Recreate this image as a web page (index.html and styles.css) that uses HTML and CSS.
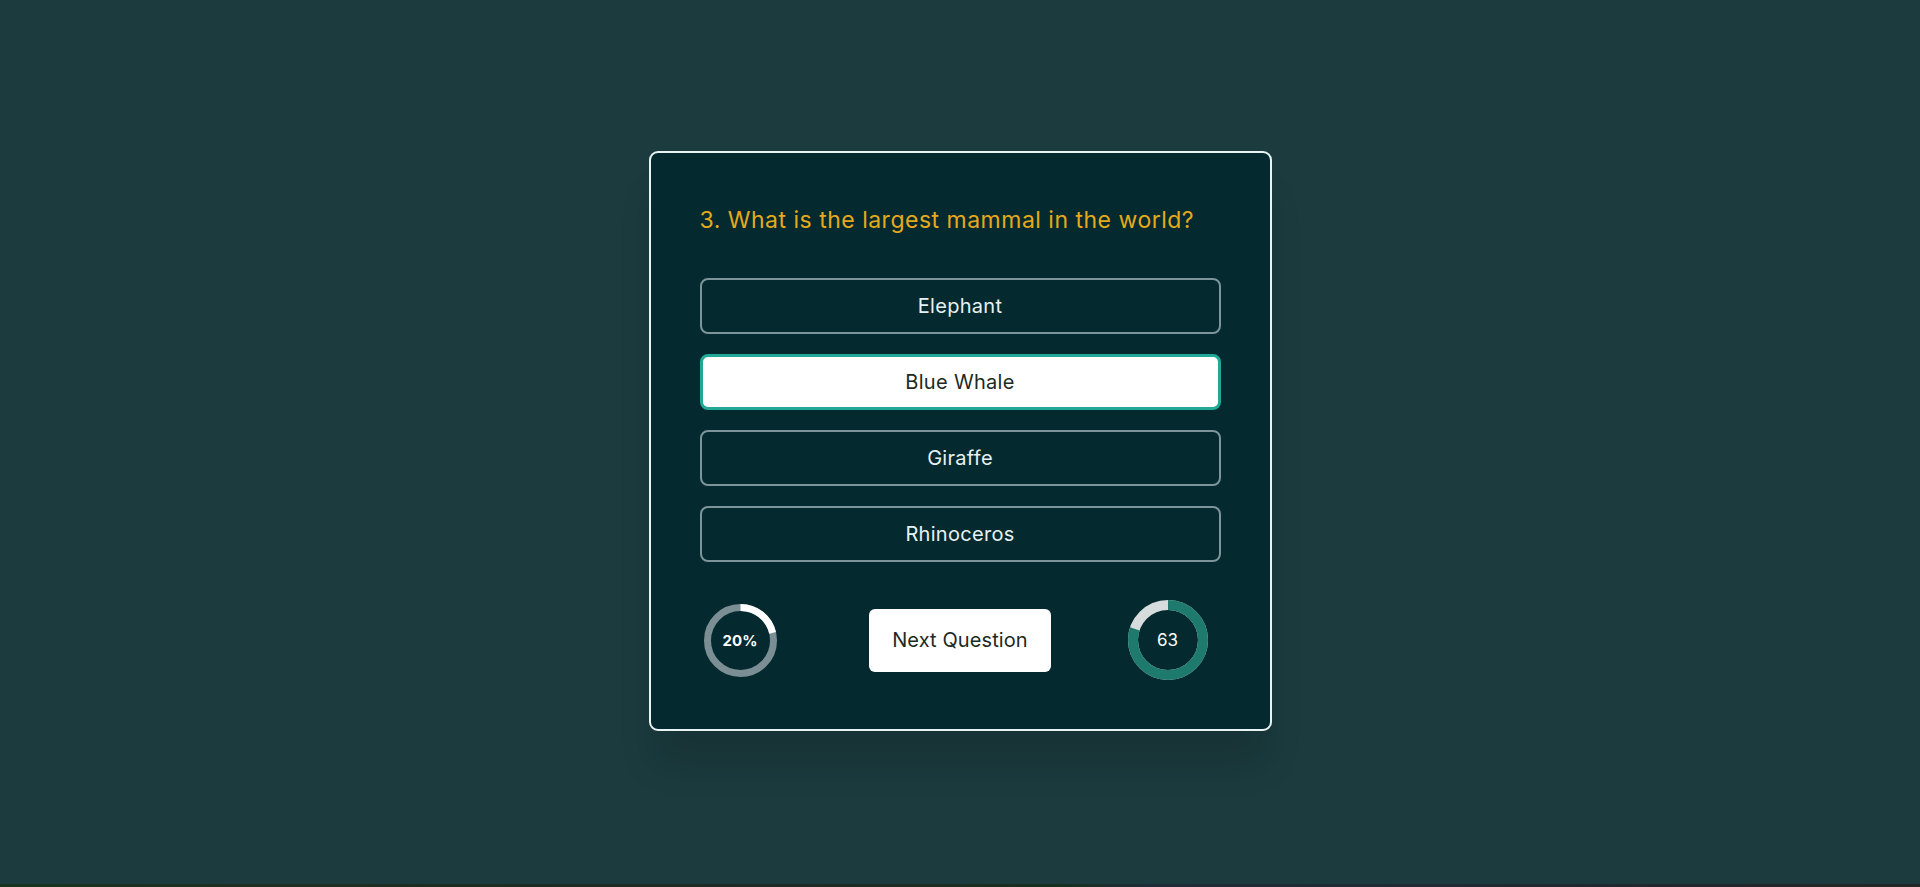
FILE: index.html
```html
<!DOCTYPE html>
<html lang="en">
<head>
<meta charset="utf-8">
<title>Quiz</title>
<link rel="stylesheet" href="styles.css">
</head>
<body>
<main class="stage">
  <section class="card">
    <h2 class="question">3. What is the largest mammal in the world?</h2>
    <div class="answers">
      <button class="answer">Elephant</button>
      <button class="answer selected">Blue Whale</button>
      <button class="answer">Giraffe</button>
      <button class="answer">Rhinoceros</button>
    </div>
    <div class="footer">
      <div class="progress">
        <svg class="ring" width="73" height="73" viewBox="0 0 73 73">
          <circle cx="36.5" cy="36.5" r="33" fill="none" stroke="#7b8e93" stroke-width="7"/>
          <circle cx="36.5" cy="36.5" r="33" fill="none" stroke="#ffffff" stroke-width="7" stroke-dasharray="44 207.3" transform="rotate(-90 36.5 36.5)"/>
        </svg>
        <span class="progress-label">20%</span>
      </div>
      <button class="next">Next Question</button>
      <div class="timer">
        <svg class="ring" width="80" height="80" viewBox="0 0 80 80">
          <circle cx="40" cy="40" r="35" fill="none" stroke="#d7dcdc" stroke-width="10"/>
          <circle cx="40" cy="40" r="35" fill="none" stroke="#1e7a6c" stroke-width="10" stroke-dasharray="176 219.9" transform="rotate(-90 40 40)"/>
        </svg>
        <span class="timer-label">63</span>
      </div>
    </div>
  </section>
</main>
<div class="bottom-strip"></div>
</body>
</html>
```
FILE: styles.css
```css
* { box-sizing: border-box; }

html, body { height: 100%; }

body {
  margin: 0;
  background: #1b3b3e;
  font-family: "Inter", "Open Sans", sans-serif;
  display: flex;
  flex-direction: column;
  min-height: 100vh;
}

.stage {
  flex: 1;
  display: flex;
  justify-content: center;
  align-items: center;
  padding-bottom: 2px;
}

.card {
  width: 623px;
  height: 580px;
  padding: 49px;
  border: 2px solid #e8f4f4;
  border-radius: 9px;
  background: #042a2f;
  box-shadow: 0 38px 36px -6px rgba(0, 0, 0, 0.14);
  display: flex;
  flex-direction: column;
}

.question {
  margin: 0 0 42px;
  padding-top: 2px;
  font-size: 23px;
  line-height: 32px;
  letter-spacing: 0.5px;
  font-weight: 400;
  color: #e6a91c;
}

.answers {
  display: flex;
  flex-direction: column;
  gap: 20px;
}

.answer {
  height: 56px;
  border: 2px solid #7d959a;
  border-radius: 8px;
  background: transparent;
  color: #e8f1f1;
  font-family: inherit;
  font-size: 20px;
  letter-spacing: 0.3px;
  font-weight: 400;
  cursor: pointer;
}

.answer.selected {
  background: #ffffff;
  border: 3px solid #22a897;
  color: #1d2a24;
}

.footer {
  margin-top: 38px;
  display: grid;
  grid-template-columns: 1fr auto 1fr;
  align-items: center;
}

.progress,
.timer {
  display: grid;
  place-items: center;
}

.progress > *,
.timer > * {
  grid-area: 1 / 1;
}

.progress { justify-self: start; margin-left: 4px; }
.timer { justify-self: end; margin-right: 13px; }

.ring { display: block; }

.progress-label {
  color: #ffffff;
  font-size: 15px;
  font-weight: 700;
}

.timer-label {
  color: #ffffff;
  font-size: 17px;
  font-weight: 400;
}

.next {
  width: 182px;
  height: 63px;
  border: none;
  border-radius: 6px;
  background: #ffffff;
  color: #1d2a22;
  font-family: inherit;
  font-size: 20px;
  letter-spacing: 0.1px;
  font-weight: 400;
  cursor: pointer;
}

.bottom-strip {
  height: 3px;
  background: linear-gradient(90deg, #1a3320 0%, #1d2a26 40%, #173020 55%, #1c2e38 60%, #232626 100%);
}
```
